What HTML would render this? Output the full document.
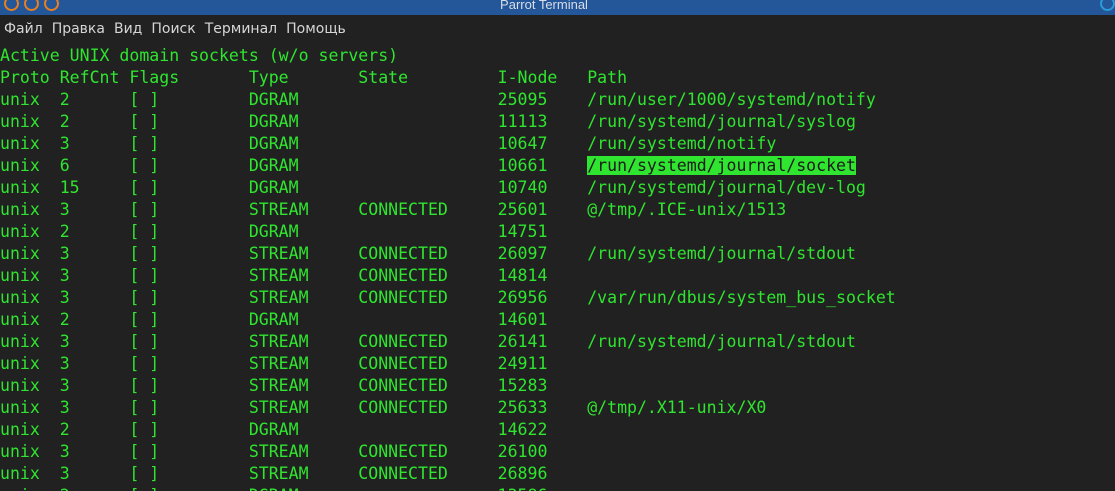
<!DOCTYPE html>
<html><head><meta charset="utf-8"><style>
html,body{margin:0;width:1115px;height:491px;overflow:hidden;background:#212121;position:relative;font-family:"DejaVu Sans Mono",monospace}
#tb{position:absolute;left:0;top:0;width:1115px;height:15px;background:#23579a;}
#tb .t{position:absolute;left:0;width:1088px;text-align:center;top:-3px;color:#d8dde6;font:13px "Liberation Sans",sans-serif}
.c{position:absolute;top:-4px;width:11px;height:11px;border:2px solid #e87e1e;border-radius:50%}
#menu{position:absolute;top:21px;left:4px;color:#d6d6d6;font:14px "DejaVu Sans","Noto Sans CJK SC",sans-serif}
#menu span{margin-right:9px}
pre{position:absolute;left:0;top:45px;margin:0;color:#2fe52f;font:16.55px/22px "DejaVu Sans Mono",monospace}
.h{background:#2fe52f;color:#1a1a1a}
</style></head><body>
<div id="tb"><div class="t">Parrot Terminal</div>
<div class="c" style="left:4px"></div><div class="c" style="left:24px"></div><div class="c" style="left:44px"></div>
<div class="c" style="left:1100px;border-color:#2a9ad8"></div></div>
<div id="menu"><span>Файл</span><span>Правка</span><span>Вид</span><span>Поиск</span><span>Терминал</span><span>Помощь</span></div>
<pre>Active UNIX domain sockets (w/o servers)
Proto RefCnt Flags       Type       State         I-Node   Path
unix  2      [ ]         DGRAM                    25095    /run/user/1000/systemd/notify
unix  2      [ ]         DGRAM                    11113    /run/systemd/journal/syslog
unix  3      [ ]         DGRAM                    10647    /run/systemd/notify
unix  6      [ ]         DGRAM                    10661    <span class="h">/run/systemd/journal/socket</span>
unix  15     [ ]         DGRAM                    10740    /run/systemd/journal/dev-log
unix  3      [ ]         STREAM     CONNECTED     25601    @/tmp/.ICE-unix/1513
unix  2      [ ]         DGRAM                    14751
unix  3      [ ]         STREAM     CONNECTED     26097    /run/systemd/journal/stdout
unix  3      [ ]         STREAM     CONNECTED     14814
unix  3      [ ]         STREAM     CONNECTED     26956    /var/run/dbus/system_bus_socket
unix  2      [ ]         DGRAM                    14601
unix  3      [ ]         STREAM     CONNECTED     26141    /run/systemd/journal/stdout
unix  3      [ ]         STREAM     CONNECTED     24911
unix  3      [ ]         STREAM     CONNECTED     15283
unix  3      [ ]         STREAM     CONNECTED     25633    @/tmp/.X11-unix/X0
unix  2      [ ]         DGRAM                    14622
unix  3      [ ]         STREAM     CONNECTED     26100
unix  3      [ ]         STREAM     CONNECTED     26896
unix  2      [ ]         DGRAM                    13586</pre>
</body></html>
